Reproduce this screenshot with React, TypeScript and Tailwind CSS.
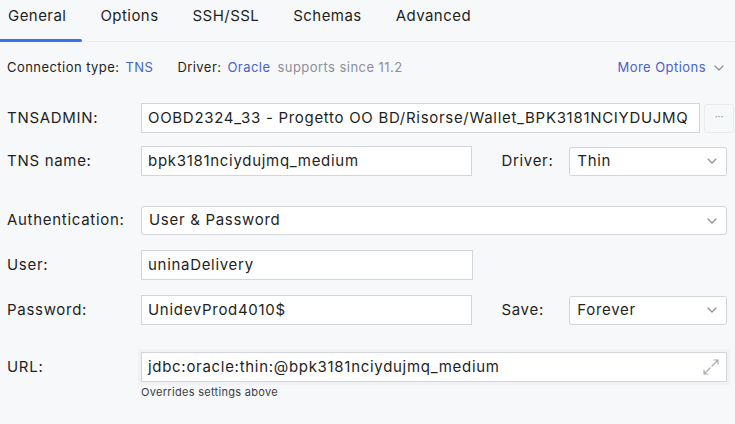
import React from "react";

const Chevron = ({ className = "" }: { className?: string }) => (
  <svg width="10" height="6" viewBox="0 0 10 6" className={className} fill="none">
    <path d="M1 1l4 4 4-4" stroke="#8c8f99" strokeWidth="1.2" strokeLinecap="round" strokeLinejoin="round" />
  </svg>
);

const Field = ({ value, className = "" }: { value: string; className?: string }) => (
  <div className={`h-[30px] flex items-center bg-white border border-[#d3d5db] px-[6px] text-[15px] tracking-[0.7px] text-[#1e1f22] ${className}`}>
    {value}
  </div>
);

const Select = ({ value, className = "" }: { value: string; className?: string }) => (
  <div className={`h-[29px] flex items-center justify-between bg-white border border-[#d3d5db] rounded-[3px] pl-[7px] pr-[9px] text-[15px] tracking-[0.7px] text-[#1e1f22] ${className}`}>
    <span>{value}</span>
    <Chevron />
  </div>
);

const Label = ({ children }: { children: React.ReactNode }) => (
  <div className="w-[134px] shrink-0 text-[15px] tracking-[0.7px] text-[#1e1f22]">{children}</div>
);

export default function App() {
  const tabs = ["General", "Options", "SSH/SSL", "Schemas", "Advanced"];
  return (
    <div className="w-[735px] h-[424px] bg-[#f7f8fa] overflow-hidden" style={{ fontFamily: "Inter, 'Noto Sans', sans-serif" }}>
      <div className="flex gap-[34px] pl-[8px] h-[42px] border-b border-[#ebecf0]">
        {tabs.map((t, i) => (
          <div key={t} className="relative h-full flex items-start pt-[5px] text-[15px] tracking-[0.45px] text-[#1e1f22]">
            {t}
            {i === 0 && <div className="absolute left-[-8px] right-[-16px] bottom-[-1px] h-[3px] bg-[#3574f0] rounded-r-[2px]" />}
          </div>
        ))}
      </div>

      <div className="pl-[7px] pr-[8px]">
        <div className="flex items-center justify-between h-[28px] mt-[12px] text-[13px] tracking-[0.45px]">
          <div className="flex items-center">
            <span className="text-[#1e1f22]">Connection type:</span>
            <span className="ml-[6px] text-[#4a62c8]">TNS</span>
            <span className="ml-[24px] text-[#1e1f22]">Driver:</span>
            <span className="ml-[6px] text-[#4a62c8]">Oracle</span>
            <span className="ml-[7px] text-[#8c8f99]">supports since 11.2</span>
          </div>
          <div className="flex items-center gap-[8px] pr-[3px] text-[#4a62c8]">
            More Options
            <Chevron />
          </div>
        </div>

        <div className="flex items-center mt-[21px] mr-[-6px]">
          <Label>TNSADMIN:</Label>
          <Field value="OOBD2324_33 - Progetto OO BD/Risorse/Wallet_BPK3181NCIYDUJMQ" className="w-[559px] shrink-0 overflow-hidden whitespace-nowrap" />
          <div className="ml-[4px] w-[30px] h-[29px] shrink-0 flex items-center justify-center rounded-[3px] border border-[#ebecf0] bg-[#f7f8fa] text-[10px] text-[#8c8f99] pb-[4px]">···</div>
        </div>

        <div className="flex items-center mt-[13px]">
          <Label>TNS name:</Label>
          <Field value="bpk3181nciydujmq_medium" className="w-[332px]" />
          <div className="ml-[29px] w-[68px] text-[15px] tracking-[0.7px] text-[#1e1f22]">Driver:</div>
          <Select value="Thin" className="w-[158px]" />
        </div>

        <div className="flex items-center mt-[30px]">
          <Label>Authentication:</Label>
          <Select value="User & Password" className="flex-1" />
        </div>

        <div className="flex items-center mt-[15px]">
          <Label>User:</Label>
          <Field value="uninaDelivery" className="w-[332px]" />
        </div>

        <div className="flex items-center mt-[15px]">
          <Label>Password:</Label>
          <Field value="UnidevProd4010$" className="w-[332px]" />
          <div className="ml-[29px] w-[68px] text-[15px] tracking-[0.7px] text-[#1e1f22]">Save:</div>
          <Select value="Forever" className="w-[158px]" />
        </div>

        <div className="flex items-center mt-[27px]">
          <Label>URL:</Label>
          <div className="flex-1 h-[30px] flex items-center justify-between bg-white border border-[#d3d5db] pl-[6px] pr-[6px] text-[15px] tracking-[0.7px] text-[#1e1f22] shadow-[0_0_0_3px_#f1f2f5]">
            <span>jdbc:oracle:thin:@bpk3181nciydujmq_medium</span>
            <svg width="18" height="18" viewBox="0 0 18 18" fill="none" stroke="#a8abb3" strokeWidth="1.2" strokeLinecap="round">
              <path d="M10 8l6-6M12 2h4v4" />
              <path d="M8 10l-6 6M2 12v4h4" />
            </svg>
          </div>
        </div>
        <div className="ml-[134px] mt-[2px] text-[11px] tracking-[0.3px] text-[#3b3d42]">Overrides settings above</div>
      </div>
    </div>
  );
}
